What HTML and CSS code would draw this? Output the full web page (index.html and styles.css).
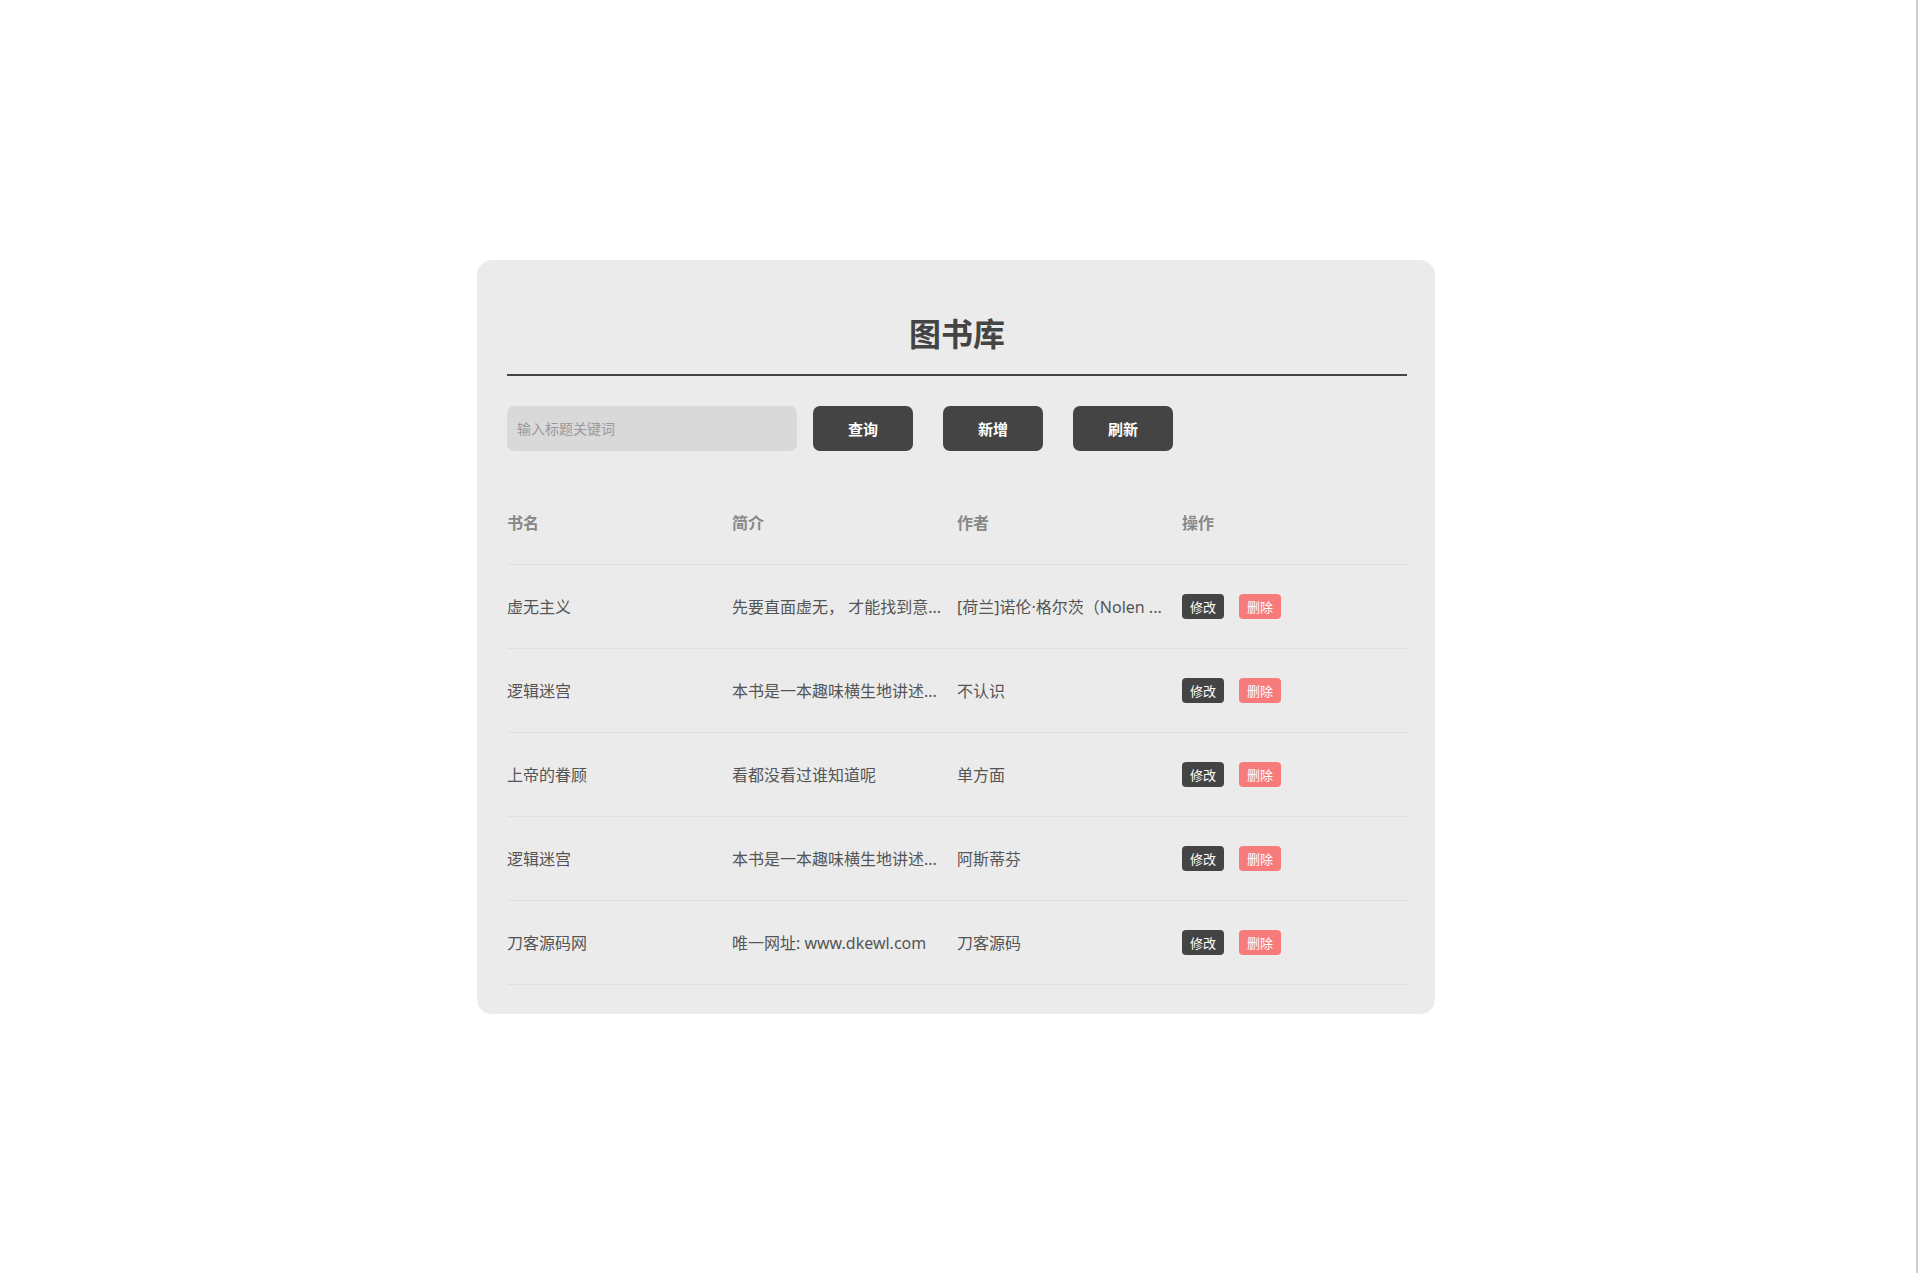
FILE: index.html
```html
<!DOCTYPE html>
<html lang="zh-CN">
<head>
<meta charset="utf-8">
<title>图书库</title>
<link rel="stylesheet" href="styles.css">
</head>
<body>
<div class="card">
  <h1 class="title">图书库</h1>
  <div class="toolbar">
    <input class="search" type="text" placeholder="输入标题关键词">
    <button class="btn btn-query">查询</button>
    <button class="btn">新增</button>
    <button class="btn">刷新</button>
  </div>
  <div class="table">
    <div class="row head">
      <div class="cell">书名</div>
      <div class="cell">简介</div>
      <div class="cell">作者</div>
      <div class="cell">操作</div>
    </div>
    <div class="row">
      <div class="cell">虚无主义</div>
      <div class="cell">先要直面虚无， 才能找到意...</div>
      <div class="cell">[荷兰]诺伦·格尔茨（Nolen ...</div>
      <div class="cell ops"><span class="tag edit">修改</span><span class="tag del">删除</span></div>
    </div>
    <div class="row">
      <div class="cell">逻辑迷宫</div>
      <div class="cell">本书是一本趣味横生地讲述...</div>
      <div class="cell">不认识</div>
      <div class="cell ops"><span class="tag edit">修改</span><span class="tag del">删除</span></div>
    </div>
    <div class="row">
      <div class="cell">上帝的眷顾</div>
      <div class="cell">看都没看过谁知道呢</div>
      <div class="cell">单方面</div>
      <div class="cell ops"><span class="tag edit">修改</span><span class="tag del">删除</span></div>
    </div>
    <div class="row">
      <div class="cell">逻辑迷宫</div>
      <div class="cell">本书是一本趣味横生地讲述...</div>
      <div class="cell">阿斯蒂芬</div>
      <div class="cell ops"><span class="tag edit">修改</span><span class="tag del">删除</span></div>
    </div>
    <div class="row">
      <div class="cell">刀客源码网</div>
      <div class="cell">唯一网址: www.dkewl.com</div>
      <div class="cell">刀客源码</div>
      <div class="cell ops"><span class="tag edit">修改</span><span class="tag del">删除</span></div>
    </div>
  </div>
</div>
</body>
</html>
```

FILE: styles.css
```css
* {
  box-sizing: border-box;
}

html {
  height: 100%;
}

body {
  margin: 0;
  min-height: 100vh;
  padding-right: 4px;
  border-right: 2px solid #cfcfcf;
  display: flex;
  align-items: center;
  justify-content: center;
  background: #ffffff;
  font-family: "Noto Sans", "Noto Sans CJK SC", sans-serif;
  color: #555555;
}

.card {
  width: 958px;
  padding: 31px 28px 29px 30px;
  background: #ebebeb;
  border-radius: 15px;
}

.title {
  margin: 0;
  padding: 17px 0 18px;
  font-family: "Noto Sans CJK SC", sans-serif;
  font-size: 32px;
  line-height: 48px;
  font-weight: 700;
  color: #444444;
  text-align: center;
  border-bottom: 2px solid #444444;
}

.toolbar {
  display: flex;
  align-items: center;
  margin-top: 30px;
  height: 45px;
}

.search {
  width: 290px;
  height: 45px;
  border: none;
  outline: none;
  border-radius: 7px;
  background: #d9d9d9;
  padding: 0 10px;
  font-family: "Noto Sans CJK SC", sans-serif;
  font-size: 14px;
  color: #555555;
}

.search::placeholder {
  color: #999999;
}

.btn {
  width: 100px;
  height: 45px;
  margin-left: 30px;
  border: none;
  border-radius: 7px;
  background: #444444;
  color: #ffffff;
  font-family: "Noto Sans CJK SC", sans-serif;
  font-size: 15px;
  font-weight: 700;
  padding: 0;
}

.btn-query {
  margin-left: 16px;
}

.table {
  margin-top: 30px;
  width: 900px;
}

.row {
  display: grid;
  grid-template-columns: repeat(4, 225px);
  align-items: center;
  height: 84px;
  border-bottom: 1px solid #dfdfdf;
}

.cell {
  min-width: 0;
  padding-right: 15px;
  white-space: nowrap;
  font-size: 16px;
  color: #555555;
}

.head .cell {
  font-weight: 700;
  color: #888888;
}

.ops {
  display: flex;
  align-items: center;
  gap: 15px;
}

.tag {
  display: inline-flex;
  align-items: center;
  justify-content: center;
  width: 42px;
  height: 25px;
  border-radius: 4px;
  font-family: "Noto Sans CJK SC", sans-serif;
  font-size: 13px;
  color: #ffffff;
}

.edit {
  background: #444444;
}

.del {
  background: #f77b7b;
}
```
